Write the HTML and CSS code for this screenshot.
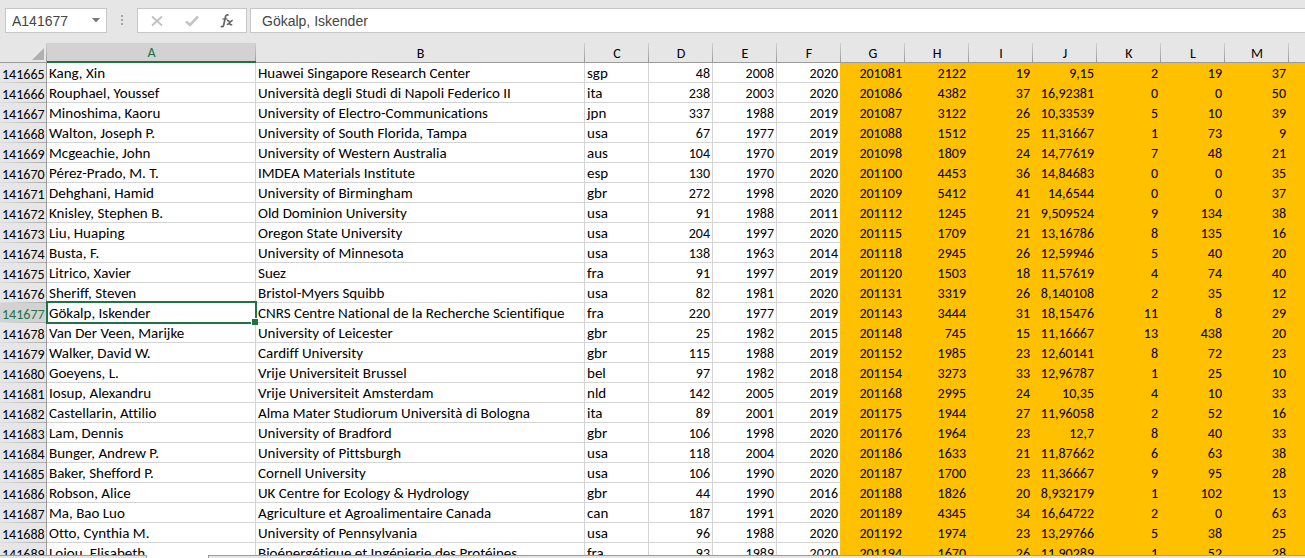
FILE: index.html
```html
<!DOCTYPE html>
<html lang="en">
<head>
<meta charset="utf-8">
<title>Spreadsheet</title>
<link rel="stylesheet" href="styles.css">
</head>
<body>
<header class="formula-bar">
  <div class="name-box">
    <input class="name-input" type="text" value="A141677" aria-label="Name box">
    <button class="name-toggle" type="button" aria-label="Show names"><svg width="8" height="5" viewBox="0 0 8 5"><path d="M0 0h8L4 4.500z" fill="#777"/></svg></button>
  </div>
  <svg class="grip" width="2" height="12" viewBox="0 0 2 12"><path d="M0 0h2v2H0zM0 4h2v2H0zM0 8h2v2H0z" fill="#a6a6a6"/></svg>
  <div class="actions">
    <button type="button" aria-label="Cancel"><svg width="12" height="12" viewBox="0 0 12 12"><path d="M1 1.500l10 9M11 1.500l-10 9" stroke="#c0c0c0" stroke-width="1.800" fill="none"/></svg></button>
    <button type="button" aria-label="Enter"><svg width="14" height="12" viewBox="0 0 14 12"><path d="M1 6.500l4 3.500 8-8.500" stroke="#c4c4c4" stroke-width="2.600" fill="none"/></svg></button>
    <button type="button" aria-label="Insert function"><svg width="14" height="14" viewBox="0 0 14 14" fill="none" stroke="#666"><path d="M8.500 1.500C7.200.3 5.900 1 5.400 3L3.700 11c-.4 1.700-1.300 2.200-2.900 1.300" stroke-width="1.700"/><path d="M2.500 5h5" stroke-width="1.300"/><path d="M7 6.800c1.500-.6 2 .2 2.500 2s1 2.300 2.700 1.700M12.800 6.600c-1.300-.3-2 .7-3 2s-1.500 2-3 1.700" stroke-width="1.500"/></svg></button>
  </div>
  <input class="formula-input" type="text" value="Gökalp, Iskender" aria-label="Formula">
</header>
<main class="sheet">
<table class="grid">
<colgroup><col class="c-head"><col class="c-name"><col class="c-org"><col class="c-unit" span="11"><col></colgroup>
<thead><tr><th class="corner"><svg width="12" height="12" viewBox="0 0 12 12"><path d="M12 0v12H0z" fill="#b1b1b1"/></svg></th><th class="current">A</th><th>B</th><th>C</th><th>D</th><th>E</th><th>F</th><th>G</th><th>H</th><th>I</th><th>J</th><th>K</th><th>L</th><th>M</th><th></th></tr></thead>
<tbody>
<tr><th>141665<td>Kang, Xin<td>Huawei Singapore Research Center<td>sgp<td>48<td>2008<td>2020<td>201081<td>2122<td>19<td>9,15<td>2<td>19<td>37<td></tr>
<tr><th>141666<td>Rouphael, Youssef<td>Università degli Studi di Napoli Federico II<td>ita<td>238<td>2003<td>2020<td>201086<td>4382<td>37<td>16,92381<td>0<td>0<td>50<td></tr>
<tr><th>141667<td>Minoshima, Kaoru<td>University of Electro-Communications<td>jpn<td>337<td>1988<td>2019<td>201087<td>3122<td>26<td>10,33539<td>5<td>10<td>39<td></tr>
<tr><th>141668<td>Walton, Joseph P.<td>University of South Florida, Tampa<td>usa<td>67<td>1977<td>2019<td>201088<td>1512<td>25<td>11,31667<td>1<td>73<td>9<td></tr>
<tr><th>141669<td>Mcgeachie, John<td>University of Western Australia<td>aus<td>104<td>1970<td>2019<td>201098<td>1809<td>24<td>14,77619<td>7<td>48<td>21<td></tr>
<tr><th>141670<td>Pérez-Prado, M. T.<td>IMDEA Materials Institute<td>esp<td>130<td>1970<td>2020<td>201100<td>4453<td>36<td>14,84683<td>0<td>0<td>35<td></tr>
<tr><th>141671<td>Dehghani, Hamid<td>University of Birmingham<td>gbr<td>272<td>1998<td>2020<td>201109<td>5412<td>41<td>14,6544<td>0<td>0<td>37<td></tr>
<tr><th>141672<td>Knisley, Stephen B.<td>Old Dominion University<td>usa<td>91<td>1988<td>2011<td>201112<td>1245<td>21<td>9,509524<td>9<td>134<td>38<td></tr>
<tr><th>141673<td>Liu, Huaping<td>Oregon State University<td>usa<td>204<td>1997<td>2020<td>201115<td>1709<td>21<td>13,16786<td>8<td>135<td>16<td></tr>
<tr><th>141674<td>Busta, F.<td>University of Minnesota<td>usa<td>138<td>1963<td>2014<td>201118<td>2945<td>26<td>12,59946<td>5<td>40<td>20<td></tr>
<tr><th>141675<td>Litrico, Xavier<td>Suez<td>fra<td>91<td>1997<td>2019<td>201120<td>1503<td>18<td>11,57619<td>4<td>74<td>40<td></tr>
<tr><th>141676<td>Sheriff, Steven<td>Bristol-Myers Squibb<td>usa<td>82<td>1981<td>2020<td>201131<td>3319<td>26<td>8,140108<td>2<td>35<td>12<td></tr>
<tr><th class="current">141677<td class="selected">Gökalp, Iskender<td>CNRS Centre National de la Recherche Scientifique<td>fra<td>220<td>1977<td>2019<td>201143<td>3444<td>31<td>18,15476<td>11<td>8<td>29<td></tr>
<tr><th>141678<td>Van Der Veen, Marijke<td>University of Leicester<td>gbr<td>25<td>1982<td>2015<td>201148<td>745<td>15<td>11,16667<td>13<td>438<td>20<td></tr>
<tr><th>141679<td>Walker, David W.<td>Cardiff University<td>gbr<td>115<td>1988<td>2019<td>201152<td>1985<td>23<td>12,60141<td>8<td>72<td>23<td></tr>
<tr><th>141680<td>Goeyens, L.<td>Vrije Universiteit Brussel<td>bel<td>97<td>1982<td>2018<td>201154<td>3273<td>33<td>12,96787<td>1<td>25<td>10<td></tr>
<tr><th>141681<td>Iosup, Alexandru<td>Vrije Universiteit Amsterdam<td>nld<td>142<td>2005<td>2019<td>201168<td>2995<td>24<td>10,35<td>4<td>10<td>33<td></tr>
<tr><th>141682<td>Castellarin, Attilio<td>Alma Mater Studiorum Università di Bologna<td>ita<td>89<td>2001<td>2019<td>201175<td>1944<td>27<td>11,96058<td>2<td>52<td>16<td></tr>
<tr><th>141683<td>Lam, Dennis<td>University of Bradford<td>gbr<td>106<td>1998<td>2020<td>201176<td>1964<td>23<td>12,7<td>8<td>40<td>33<td></tr>
<tr><th>141684<td>Bunger, Andrew P.<td>University of Pittsburgh<td>usa<td>118<td>2004<td>2020<td>201186<td>1633<td>21<td>11,87662<td>6<td>63<td>38<td></tr>
<tr><th>141685<td>Baker, Shefford P.<td>Cornell University<td>usa<td>106<td>1990<td>2020<td>201187<td>1700<td>23<td>11,36667<td>9<td>95<td>28<td></tr>
<tr><th>141686<td>Robson, Alice<td>UK Centre for Ecology &amp; Hydrology<td>gbr<td>44<td>1990<td>2016<td>201188<td>1826<td>20<td>8,932179<td>1<td>102<td>13<td></tr>
<tr><th>141687<td>Ma, Bao Luo<td>Agriculture et Agroalimentaire Canada<td>can<td>187<td>1991<td>2020<td>201189<td>4345<td>34<td>16,64722<td>2<td>0<td>63<td></tr>
<tr><th>141688<td>Otto, Cynthia M.<td>University of Pennsylvania<td>usa<td>96<td>1988<td>2020<td>201192<td>1974<td>23<td>13,29766<td>5<td>38<td>25<td></tr>
<tr><th>141689<td>Lojou, Elisabeth<td>Bioénergétique et Ingénierie des Protéines<td>fra<td>93<td>1989<td>2020<td>201194<td>1670<td>26<td>11,90289<td>1<td>52<td>28<td></tr>
</tbody>
</table>
</main>
<footer class="tabs"><div class="tabs-nav"></div><div class="tab-active"></div><div class="tabs-rest"></div></footer>
</body>
</html>
```
FILE: styles.css
```css
* { box-sizing: border-box; }
body {
  margin: 0;
  height: 100vh;
  display: flex;
  flex-direction: column;
  overflow: hidden;
  background: #e6e6e6;
  color: #000;
  font: 15px/17px Calibri, Carlito, "Noto Sans", sans-serif;
  font-variant-ligatures: none;
}
button { padding: 0; border: 0; background: none; display: grid; place-items: center; }
input { border: 0; outline: 0; min-width: 0; background: #fff; color: #444; font: 14px/20px "Liberation Sans", sans-serif; }

.formula-bar { display: flex; align-items: stretch; flex: none; padding: 8px 0 0 5px; margin-bottom: 10px; }
.name-box, .actions { display: flex; height: 25px; background: #fff; border: 1px solid #c6c6c6; }
.name-box { width: 102px; }
.name-input { flex: 1; padding: 0 0 0 6px; }
.name-toggle { width: 20px; }
.grip { align-self: center; margin: 0 14px; }
.actions { width: 110px; margin-right: 3px; padding: 0 1px; }
.actions button { flex: 1; }
.formula-input { flex: 1; height: 25px; border: 1px solid #c6c6c6; border-right: 0; padding: 0 11px; }

.sheet { flex: 1; min-height: 0; overflow: hidden; background: #fff; }
.grid { width: 100%; table-layout: fixed; border-collapse: separate; border-spacing: 0; }
.c-head { width: 47px; }
.c-name { width: 209px; }
.c-org { width: 329px; }
.c-unit { width: 64px; }
.grid th, .grid td { height: 20px; padding: 2px 2px 0; white-space: nowrap; font-weight: 400; overflow: hidden; }
.grid thead th {
  font-size: 14px;
  line-height: 16px;
  text-align: center;
  border-bottom: 1px solid #9b9b9b;
  background: linear-gradient(#d0d0d0, #9b9b9b) right / 1px 100% no-repeat #e6e6e6;
}
.grid thead .corner { padding: 0 3px 2px 0; text-align: right; line-height: 0; vertical-align: bottom; }
.grid thead .current { background-color: #d2d2d2; border-bottom: 2px solid #217346; color: #217346; }
.grid thead th:last-child { background: #e6e6e6; }
.grid tbody th {
  font-size: 14px;
  text-align: right;
  border-right: 1px solid #9b9b9b;
  background: linear-gradient(90deg, #e0e0e0, #ababab) bottom / 100% 1px no-repeat #e6e6e6;
}
.grid tbody .current { background-color: #d2d2d2; color: #217346; }
.grid td { border: solid #d4d4d4; border-width: 0 1px 1px 0; }
.grid td:nth-child(n+5) { font-size: 14px; text-align: right; }
.grid td:nth-child(n+8) { background: #ffc000; border-color: #ffc000; }
.grid td:nth-child(7) { border-right-color: #ffc000; }
.grid .selected { position: relative; overflow: visible; }
.selected::before { content: ""; position: absolute; inset: -2px -2px -2px -1px; border: 2px solid #217346; }
.selected::after { content: ""; position: absolute; right: -3px; bottom: -3px; width: 6px; height: 6px; background: #217346; border: solid #fff; border-width: 1px 0 0 1px; }

.tabs { flex: none; display: flex; height: 3px; background: #fff; }
.tabs-nav, .tabs-rest { border-top: 1px solid #9b9b9b; background: #e6e6e6; }
.tabs-nav { width: 147px; border-right: 1px solid #9b9b9b; }
.tab-active { width: 61px; }
.tabs-rest { flex: 1; border-left: 1px solid #9b9b9b; }
```
